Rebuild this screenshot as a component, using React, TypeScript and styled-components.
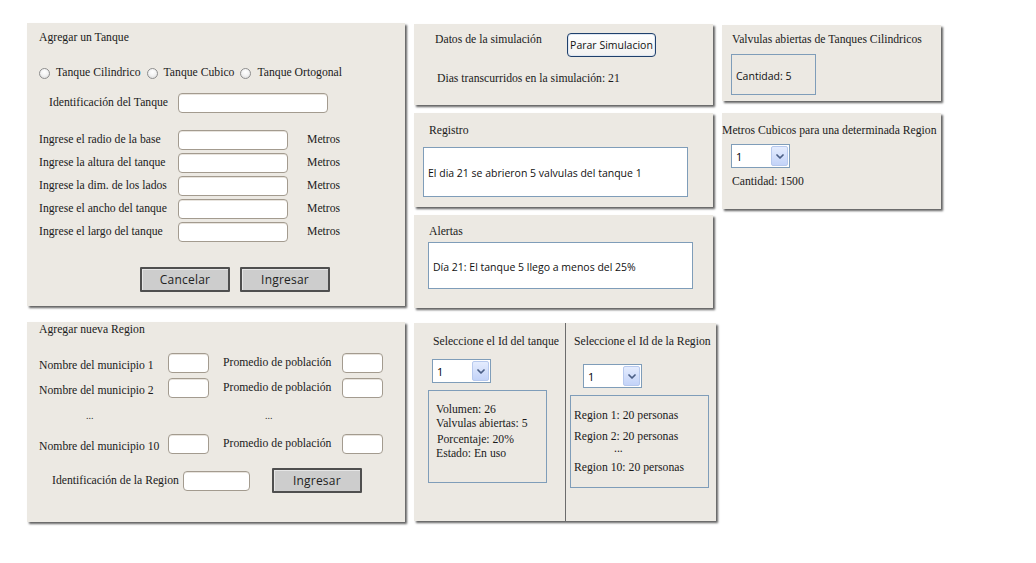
import React from 'react';
import styled, { createGlobalStyle } from 'styled-components';

const GlobalStyle = createGlobalStyle`
  html, body { margin: 0; padding: 0; background: #ffffff; }
  body {
    font-family: "Liberation Serif", "Times New Roman", serif;
    font-size: 11.7px;
    color: #1b1b1b;
  }
  * { box-sizing: border-box; }
`;

const SANS = `"Open Sans", "Liberation Sans", Arial, sans-serif`;

const Page = styled.div`
  width: 1036px;
  height: 563px;
  padding: 23px 0 0 27px;
  display: flex;
  flex-direction: column;
  gap: 14px;
`;

const Row = styled.div`
  display: flex;
  align-items: flex-start;
  gap: 9px;
`;

const Column = styled.div<{ $top: number; $gap: number }>`
  display: flex;
  flex-direction: column;
  margin-top: ${p => p.$top}px;
  gap: ${p => p.$gap}px;
`;

const Panel = styled.section<{ $w: number; $h: number; $pad?: string; $top?: number }>`
  width: ${p => p.$w}px;
  height: ${p => p.$h}px;
  margin-top: ${p => p.$top ?? 0}px;
  padding: ${p => p.$pad ?? '0'};
  background: #ece9e3;
  box-shadow: 2px 2px 2px rgba(0, 0, 0, 0.62);
  display: flex;
  flex-direction: column;
  align-items: flex-start;
  flex-shrink: 0;
`;

const Text = styled.div<{ $mt?: number; $ml?: number }>`
  line-height: 14px;
  white-space: nowrap;
  margin-top: ${p => p.$mt ?? 0}px;
  margin-left: ${p => p.$ml ?? 0}px;
`;

const SansText = styled.div<{ $ml?: number }>`
  font-family: ${SANS};
  font-size: 10.5px;
  line-height: 14px;
  white-space: nowrap;
  color: #111;
  margin-left: ${p => p.$ml ?? 0}px;
`;

/* ---------- form bits ---------- */

const Input = styled.div<{ $w: number }>`
  width: ${p => p.$w}px;
  height: 20px;
  background: #ffffff;
  border: 1px solid #a39b8f;
  border-radius: 4px;
  box-shadow: inset 0 1px 0 #e8e4de;
`;

const RadioRow = styled.div`
  display: flex;
  align-items: center;
  gap: 6px;
  margin-top: 21px;
`;

const RadioItem = styled.label`
  display: flex;
  align-items: center;
  gap: 6px;
  line-height: 14px;
  white-space: nowrap;
`;

const RadioDot = styled.span`
  width: 11px;
  height: 11px;
  border-radius: 50%;
  border: 1px solid #8e8e8e;
  background: radial-gradient(circle at 50% 35%, #ffffff 0%, #f3f3f3 45%, #d6d6d6 100%);
`;

const IdentRow = styled.div`
  display: flex;
  align-items: center;
  margin-top: 13px;
`;

const IdentLabel = styled.span`
  width: 139px;
  padding-left: 10px;
  line-height: 14px;
  white-space: nowrap;
`;

const FieldGrid = styled.div`
  display: grid;
  grid-template-columns: 139px 110px auto;
  grid-auto-rows: 20px;
  row-gap: 3px;
  align-items: center;
  margin-top: 17px;
`;

const FieldLabel = styled.span`
  line-height: 14px;
  white-space: nowrap;
`;

const Unit = styled.span`
  padding-left: 19px;
  line-height: 14px;
`;

const ButtonRow = styled.div`
  display: flex;
  gap: 10px;
  margin-top: 25px;
  margin-left: 101px;
`;

const SketchButton = styled.button<{ $ml?: number }>`
  width: 90px;
  height: 25px;
  margin-left: ${p => p.$ml ?? 0}px;
  padding: 0;
  background: #cdcdcd;
  border: 2px solid #4f4f4f;
  border-radius: 1px;
  box-shadow: inset 1px 1px 0 #e6e6e6;
  font-family: "Comic Sans MS", ${SANS};
  font-size: 12px;
  color: #222;
  letter-spacing: 0.2px;
`;

/* ---------- region panel ---------- */

const RegionGrid = styled.div`
  display: grid;
  grid-template-columns: 129px 41px 133px 41px;
  grid-template-rows: 20px 20px 26px 20px;
  row-gap: 5px;
  align-items: center;
  margin-top: 16px;
`;

const NameLabel = styled.span`
  line-height: 14px;
  white-space: nowrap;
  padding-top: 5px;
`;

const AvgLabel = styled.span`
  line-height: 14px;
  white-space: nowrap;
  padding-left: 14px;
`;

const Dots = styled.span<{ $pl: number }>`
  padding-left: ${p => p.$pl}px;
  line-height: 14px;
  font-size: 10px;
  color: #333;
`;

const RegionIdentRow = styled.div`
  display: flex;
  align-items: center;
  margin-top: 14px;
  padding-left: 13px;
  gap: 4px;
`;

/* ---------- simulation panels ---------- */

const SimHeader = styled.div`
  display: grid;
  grid-template-columns: 132px auto;
  align-items: start;
  padding-left: 21px;
`;

const BlueButton = styled.button`
  width: 89px;
  height: 24px;
  padding: 0;
  background: linear-gradient(#ffffff, #f1f1f1);
  border: 1px solid #1f406c;
  border-radius: 4px;
  box-shadow: inset 0 0 0 1px #dfe7f2;
  font-family: ${SANS};
  font-size: 10.5px;
  color: #111;
`;

const MessageBox = styled.div<{ $w: number; $h: number; $mt: number; $fill?: boolean }>`
  width: ${p => p.$w}px;
  height: ${p => p.$h}px;
  margin-top: ${p => p.$mt}px;
  border: 1px solid #7f9db9;
  background: ${p => (p.$fill === false ? 'transparent' : '#ffffff')};
  display: flex;
  align-items: center;
  padding-left: 4px;
  padding-top: 2px;
`;

/* ---------- select ---------- */

const SelectBox = styled.div<{ $mt: number; $ml: number }>`
  width: 59px;
  height: 24px;
  margin-top: ${p => p.$mt}px;
  margin-left: ${p => p.$ml}px;
  border: 1px solid #7f9db9;
  background: #ffffff;
  display: flex;
  align-items: stretch;
`;

const SelectValue = styled.span`
  flex: 1;
  padding-left: 4px;
  display: flex;
  align-items: center;
  font-family: ${SANS};
  font-size: 11px;
  color: #000;
`;

const SelectArrow = styled.span`
  width: 17px;
  margin: 1px;
  border: 1px solid #b7c9ee;
  border-radius: 2px;
  background: linear-gradient(#e4ecfe, #c3d3f8);
  display: flex;
  align-items: center;
  justify-content: center;
`;

const Select: React.FC<{ mt: number; ml: number }> = ({ mt, ml }) => (
  <SelectBox $mt={mt} $ml={ml}>
    <SelectValue>1</SelectValue>
    <SelectArrow>
      <svg width="8" height="5" viewBox="0 0 8 5">
        <path d="M1 1 L4 4 L7 1" fill="none" stroke="#4b5f86" strokeWidth="1.7" strokeLinecap="round" strokeLinejoin="round" />
      </svg>
    </SelectArrow>
  </SelectBox>
);

/* ---------- details panel ---------- */

const Split = styled.section`
  width: 302px;
  height: 198px;
  margin-top: 1px;
  background: #ece9e3;
  box-shadow: 2px 2px 2px rgba(0, 0, 0, 0.62);
  display: flex;
  flex-shrink: 0;
`;

const SplitSide = styled.div<{ $w?: number; $divider?: boolean; $pl: number }>`
  width: ${p => (p.$w ? `${p.$w}px` : 'auto')};
  flex: ${p => (p.$w ? '0 0 auto' : '1')};
  height: 100%;
  padding: 12px 0 0 ${p => p.$pl}px;
  border-right: ${p => (p.$divider ? '1px solid #6c6c6c' : 'none')};
  display: flex;
  flex-direction: column;
  align-items: flex-start;
`;

const InfoBox = styled.div<{ $w: number; $mt: number; $ml: number; $pl: number; $pt: number }>`
  width: ${p => p.$w}px;
  height: 93px;
  margin-top: ${p => p.$mt}px;
  margin-left: ${p => p.$ml}px;
  padding: ${p => p.$pt}px 0 0 ${p => p.$pl}px;
  border: 1px solid #7f9db9;
  display: flex;
  flex-direction: column;
  align-items: flex-start;
`;

const InfoLine = styled.div<{ $mt?: number; $ml?: number; $lh?: number }>`
  line-height: ${p => p.$lh ?? 14}px;
  white-space: nowrap;
  margin-top: ${p => p.$mt ?? 0}px;
  margin-left: ${p => p.$ml ?? 0}px;
`;

export default function App() {
  return (
    <>
      <GlobalStyle />
      <Page>
        <Row>
          {/* Agregar un Tanque */}
          <Panel $w={378} $h={283} $pad="8px 0 0 12px">
            <Text>Agregar un Tanque</Text>
            <RadioRow>
              <RadioItem><RadioDot />Tanque Cilindrico</RadioItem>
              <RadioItem><RadioDot />Tanque Cubico</RadioItem>
              <RadioItem><RadioDot />Tanque Ortogonal</RadioItem>
            </RadioRow>
            <IdentRow>
              <IdentLabel>Identificación del Tanque</IdentLabel>
              <Input $w={150} />
            </IdentRow>
            <FieldGrid>
              <FieldLabel>Ingrese el radio de la base</FieldLabel>
              <Input $w={110} />
              <Unit>Metros</Unit>
              <FieldLabel>Ingrese la altura del tanque</FieldLabel>
              <Input $w={110} />
              <Unit>Metros</Unit>
              <FieldLabel>Ingrese la dim. de los lados</FieldLabel>
              <Input $w={110} />
              <Unit>Metros</Unit>
              <FieldLabel>Ingrese el ancho del tanque</FieldLabel>
              <Input $w={110} />
              <Unit>Metros</Unit>
              <FieldLabel>Ingrese el largo del tanque</FieldLabel>
              <Input $w={110} />
              <Unit>Metros</Unit>
            </FieldGrid>
            <ButtonRow>
              <SketchButton>Cancelar</SketchButton>
              <SketchButton>Ingresar</SketchButton>
            </ButtonRow>
          </Panel>

          {/* middle column */}
          <Column $top={1} $gap={8}>
            <Panel $w={299} $h={81} $pad="9px 0 0 0">
              <SimHeader>
                <Text>Datos de la simulación</Text>
                <BlueButton>Parar Simulacion</BlueButton>
              </SimHeader>
              <Text $mt={15} $ml={23}>Dias transcurridos en la simulación: 21</Text>
            </Panel>
            <Panel $w={299} $h={94} $pad="11px 0 0 9px">
              <Text $ml={6}>Registro</Text>
              <MessageBox $w={265} $h={50} $mt={9}>
                <SansText>El dia 21 se abrieron 5 valvulas del tanque 1</SansText>
              </MessageBox>
            </Panel>
            <Panel $w={299} $h={93} $pad="10px 0 0 14px">
              <Text $ml={1}>Alertas</Text>
              <MessageBox $w={265} $h={47} $mt={3}>
                <SansText>Día 21: El tanque 5 llego a menos del 25%</SansText>
              </MessageBox>
            </Panel>
          </Column>

          {/* right column */}
          <Column $top={2} $gap={12}>
            <Panel $w={219} $h={76} $pad="8px 0 0 9px">
              <Text $ml={1}>Valvulas abiertas de Tanques Cilindricos</Text>
              <MessageBox $w={85} $h={41} $mt={7} $fill={false}>
                <SansText>Cantidad: 5</SansText>
              </MessageBox>
            </Panel>
            <Panel $w={219} $h={96} $pad="11px 0 0 0">
              <Text>Metros Cubicos para una determinada Region</Text>
              <Select mt={6} ml={9} />
              <Text $mt={7} $ml={10}>Cantidad: 1500</Text>
            </Panel>
          </Column>
        </Row>

        <Row>
          {/* Agregar nueva Region */}
          <Panel $w={378} $h={200} $pad="1px 0 0 12px">
            <Text>Agregar nueva Region</Text>
            <RegionGrid>
              <NameLabel>Nombre del municipio 1</NameLabel>
              <Input $w={41} />
              <AvgLabel>Promedio de población</AvgLabel>
              <Input $w={41} />
              <NameLabel>Nombre del municipio 2</NameLabel>
              <Input $w={41} />
              <AvgLabel>Promedio de población</AvgLabel>
              <Input $w={41} />
              <Dots $pl={47}>...</Dots>
              <span />
              <Dots $pl={56}>...</Dots>
              <span />
              <NameLabel>Nombre del municipio 10</NameLabel>
              <Input $w={41} />
              <AvgLabel>Promedio de población</AvgLabel>
              <Input $w={41} />
            </RegionGrid>
            <RegionIdentRow>
              <FieldLabel>Identificación de la Region</FieldLabel>
              <Input $w={67} />
              <SketchButton $ml={18}>Ingresar</SketchButton>
            </RegionIdentRow>
          </Panel>

          {/* details */}
          <Split>
            <SplitSide $w={152} $divider $pl={19}>
              <Text>Seleccione el Id del tanque</Text>
              <Select mt={10} ml={-1} />
              <InfoBox $w={119} $mt={7} $ml={-5} $pl={7} $pt={12}>
                <InfoLine>Volumen: 26</InfoLine>
                <InfoLine>Valvulas abiertas: 5</InfoLine>
                <InfoLine $mt={2} $ml={1}>Porcentaje: 20%</InfoLine>
                <InfoLine>Estado: En uso</InfoLine>
              </InfoBox>
            </SplitSide>
            <SplitSide $pl={8}>
              <Text>Seleccione el Id de la Region</Text>
              <Select mt={15} ml={9} />
              <InfoBox $w={139} $mt={7} $ml={-4} $pl={3} $pt={13}>
                <InfoLine>Region 1: 20 personas</InfoLine>
                <InfoLine $mt={7}>Region 2: 20 personas</InfoLine>
                <InfoLine $lh={10} $ml={40}>...</InfoLine>
                <InfoLine $mt={7}>Region 10: 20 personas</InfoLine>
              </InfoBox>
            </SplitSide>
          </Split>
        </Row>
      </Page>
    </>
  );
}
